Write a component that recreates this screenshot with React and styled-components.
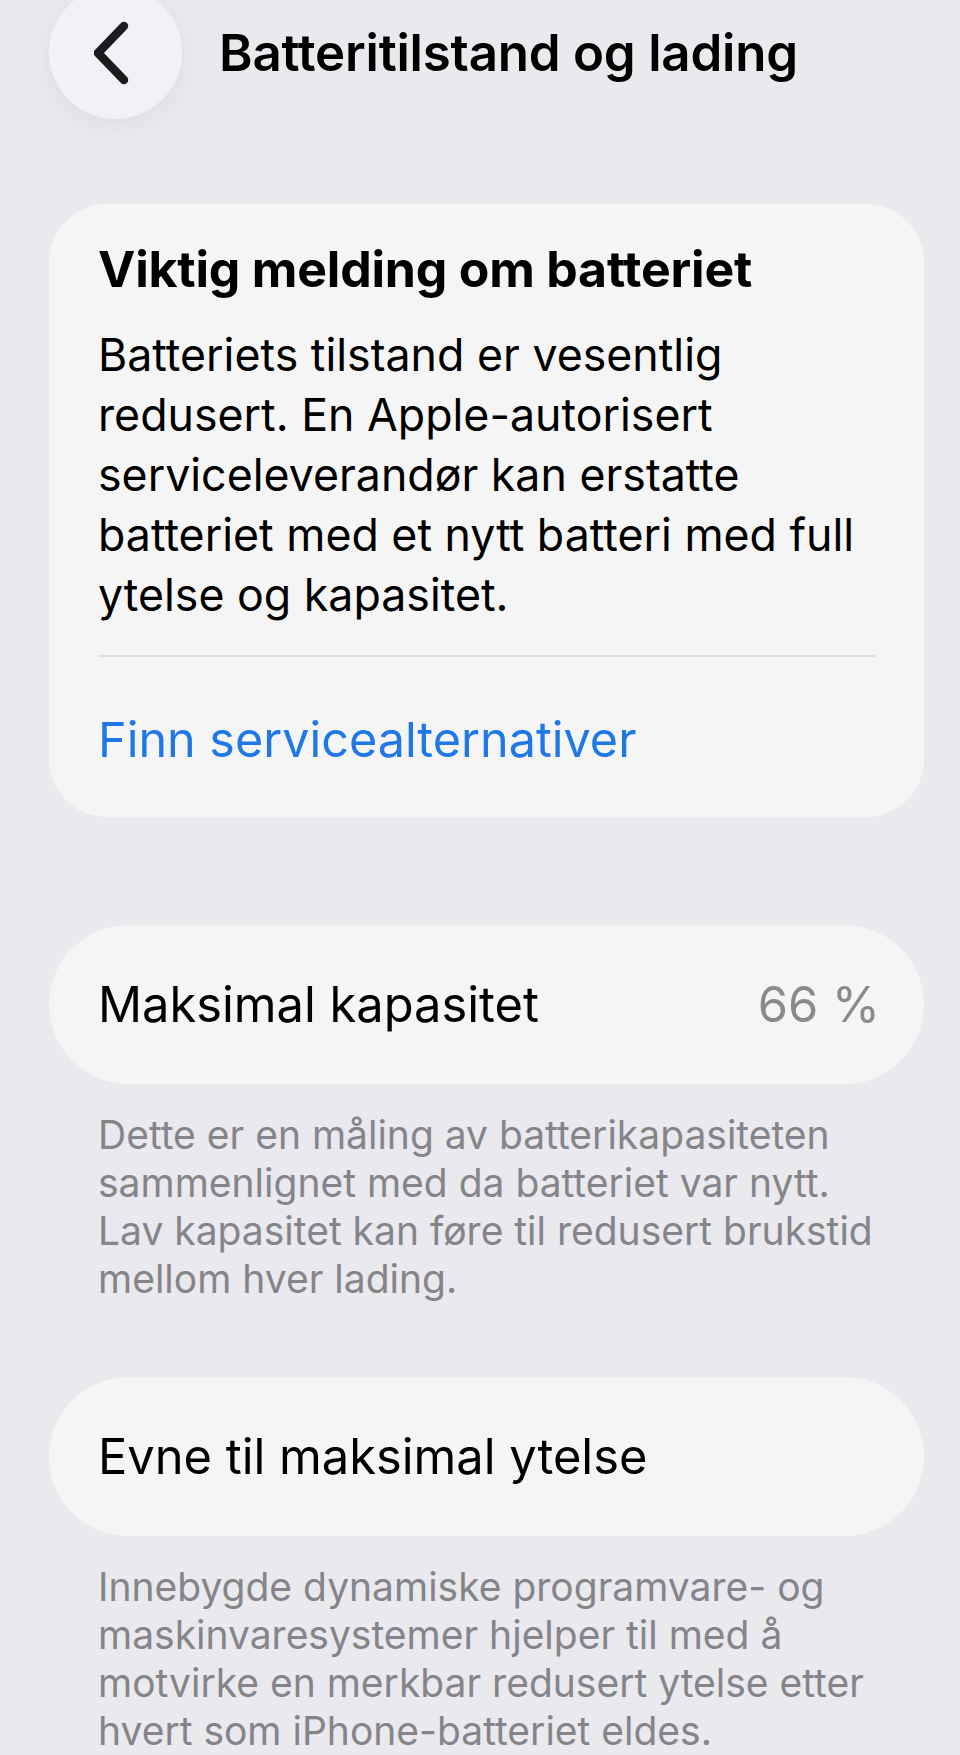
import React from "react";
import styled, { createGlobalStyle } from "styled-components";

const GlobalStyle = createGlobalStyle`
  html, body {
    margin: 0;
    padding: 0;
    background: #e9e9ee;
  }
  body {
    font-family: Inter, "Liberation Sans", sans-serif;
    color: #000;
    overflow: hidden;
  }
`;

const Page = styled.div`
  width: 960px;
  min-height: 1755px;
  background: #e9e9ee;
  padding: 0 36px 0 49px;
  box-sizing: border-box;
`;

const Header = styled.div`
  display: flex;
  align-items: center;
  gap: 37px;
  margin-top: -14px;
`;

const BackButton = styled.div`
  width: 133px;
  height: 133px;
  border-radius: 50%;
  background: #f2f2f6;
  box-shadow: 0 6px 28px rgba(0, 0, 0, 0.06);
  display: flex;
  align-items: center;
  justify-content: center;
  flex-shrink: 0;
`;

const Title = styled.h1`
  margin: 0;
  font-size: 51px;
  font-weight: 600;
  letter-spacing: -0.2px;
  line-height: 56px;
`;

const Card = styled.div`
  background: #f5f5f5;
  border-radius: 58px;
  padding: 37px 49px 47px;
  margin-top: 85px;
`;

const CardHeading = styled.h2`
  margin: 0;
  font-size: 50px;
  font-weight: 700;
  line-height: 56px;
  letter-spacing: -0.2px;
`;

const CardBody = styled.p`
  margin: 28px 0 0;
  font-size: 44.7px;
  line-height: 60px;
`;

const Divider = styled.div`
  height: 2px;
  background: #dcdcde;
  margin-top: 30px;
`;

const LinkText = styled.div`
  margin-top: 53px;
  font-size: 48.5px;
  line-height: 60px;
  color: #1f78e6;
`;

const PillRow = styled.div`
  display: flex;
  align-items: center;
  justify-content: space-between;
  height: 159px;
  padding: 0 44px 0 49px;
  background: #f5f5f5;
  border-radius: 80px;
  margin-top: ${(p) => p.$top}px;
  box-sizing: border-box;
`;

const RowLabel = styled.span`
  font-size: 48.8px;
  line-height: 60px;
`;

const RowValue = styled.span`
  font-size: 48.8px;
  line-height: 60px;
  color: #8a8a8e;
`;

const Footnote = styled.p`
  margin: 27px 0 0;
  padding: 0 49px;
  font-size: 39px;
  line-height: 48px;
  color: #858589;
`;

function Chevron() {
  return (
    <svg width="44" height="66" viewBox="0 0 44 66">
      <path
        d="M30 6 L4 33 L30 60"
        fill="none"
        stroke="#1c1c1e"
        strokeWidth="8.5"
        strokeLinecap="round"
        strokeLinejoin="round"
      />
    </svg>
  );
}

export default function App() {
  return (
    <>
      <GlobalStyle />
      <Page>
        <Header>
          <BackButton>
            <Chevron />
          </BackButton>
          <Title>Batteritilstand og lading</Title>
        </Header>

        <Card>
          <CardHeading>Viktig melding om batteriet</CardHeading>
          <CardBody>
            Batteriets tilstand er vesentlig redusert. En Apple-autorisert
            serviceleverandør kan erstatte batteriet med et nytt batteri med
            full ytelse og kapasitet.
          </CardBody>
          <Divider />
          <LinkText>Finn servicealternativer</LinkText>
        </Card>

        <PillRow $top={108}>
          <RowLabel>Maksimal kapasitet</RowLabel>
          <RowValue>66 %</RowValue>
        </PillRow>
        <Footnote>
          Dette er en måling av batterikapasiteten sammenlignet med da
          batteriet var nytt. Lav kapasitet kan føre til redusert brukstid
          mellom hver lading.
        </Footnote>

        <PillRow $top={74}>
          <RowLabel>Evne til maksimal ytelse</RowLabel>
        </PillRow>
        <Footnote>
          Innebygde dynamiske programvare- og maskinvaresystemer hjelper til
          med å motvirke en merkbar redusert ytelse etter hvert som
          iPhone-batteriet eldes.
        </Footnote>
      </Page>
    </>
  );
}
